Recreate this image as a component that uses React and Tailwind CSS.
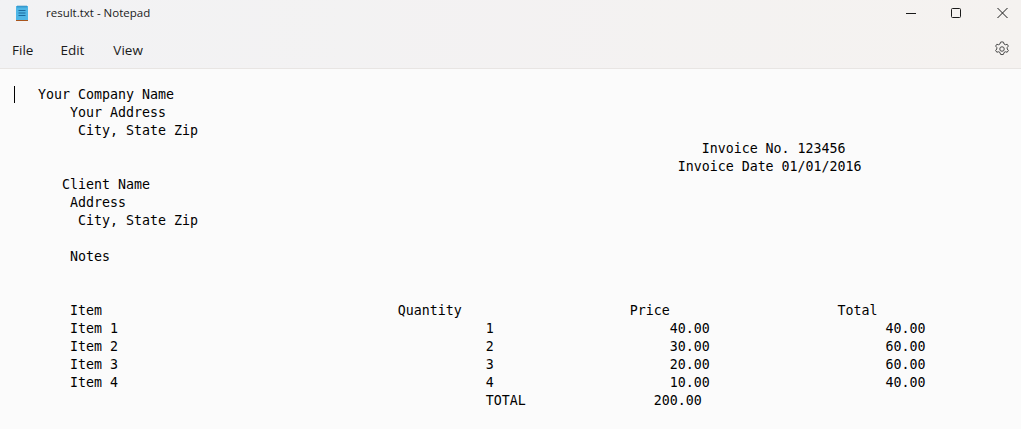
const lines = [
  "   Your Company Name",
  "       Your Address",
  "        City, State Zip",
  " ".repeat(86) + "Invoice No. 123456",
  " ".repeat(83) + "Invoice Date 01/01/2016",
  "      Client Name",
  "       Address",
  "        City, State Zip",
  "",
  "       Notes",
  "",
  "",
  "       Item" + " ".repeat(37) + "Quantity" + " ".repeat(21) + "Price" + " ".repeat(21) + "Total",
  "       Item 1" + " ".repeat(46) + "1" + " ".repeat(22) + "40.00" + " ".repeat(22) + "40.00",
  "       Item 2" + " ".repeat(46) + "2" + " ".repeat(22) + "30.00" + " ".repeat(22) + "60.00",
  "       Item 3" + " ".repeat(46) + "3" + " ".repeat(22) + "20.00" + " ".repeat(22) + "60.00",
  "       Item 4" + " ".repeat(46) + "4" + " ".repeat(22) + "10.00" + " ".repeat(22) + "40.00",
  " ".repeat(59) + "TOTAL" + " ".repeat(16) + "200.00",
];

function NotepadIcon() {
  return (
    <svg width="14" height="18" viewBox="0 0 14 18" className="ml-[15px]">
      <rect x="1" y="2" width="12" height="14" fill="#4fb6e6" />
      <rect x="1" y="16" width="12" height="1" fill="#a8551d" />
      <path d="M3 1.5v2M5 1.5v2M7 1.5v2M9 1.5v2M11 1.5v2" stroke="#1f7fb8" strokeWidth="1" />
      <path d="M3.5 6.5h7M3.5 9h7M3.5 11.5h7" stroke="#1a6a9e" strokeWidth="1" />
    </svg>
  );
}

export default function App() {
  return (
    <div className="w-[1021px] h-[429px] overflow-hidden flex flex-col bg-[#fbfbfb]">
      <div className="h-[69px] shrink-0 flex flex-col border-b border-[#e8e5e3] bg-gradient-to-r from-[#f2f2f4] to-[#f5f2f0] text-[#1b1b1b] font-['Open_Sans',sans-serif]">
        <div className="h-[26px] flex items-center">
          <NotepadIcon />
          <span className="ml-[17px] text-[11.5px] leading-none">result.txt - Notepad</span>
          <div className="ml-auto flex items-center">
            <svg width="10" height="12" viewBox="0 0 10 12" className="mr-[35px]">
              <path d="M0 6.5h10" stroke="#1a1a1a" strokeWidth="1" />
            </svg>
            <svg width="10" height="12" viewBox="0 0 10 12" className="mr-[36px]">
              <rect x="0.5" y="1.5" width="9" height="9" rx="1" fill="none" stroke="#1a1a1a" strokeWidth="1" />
            </svg>
            <svg width="11" height="12" viewBox="0 0 11 12" className="mr-[13px]">
              <path d="M0.5 1l10 10M10.5 1L0.5 11" stroke="#1a1a1a" strokeWidth="1" />
            </svg>
          </div>
        </div>
        <div className="h-[42px] pt-[7px] flex items-center text-[13.5px]">
          <span className="ml-[12px]">File</span>
          <span className="ml-[27px]">Edit</span>
          <span className="ml-[29px]">View</span>
          <svg width="18" height="18" viewBox="0 0 24 24" className="ml-auto mr-[10px] mb-[3px]" fill="none" stroke="#444" strokeWidth="1.3" strokeLinejoin="round">
            <path d="M12 2.5l2 .4.7 2.4 1.8 1 2.4-.6 1.6 2.4-1.6 1.9v2l1.6 1.9-1.6 2.4-2.4-.6-1.8 1-.7 2.4-2 .4-2-.4-.7-2.4-1.8-1-2.4.6-1.6-2.4 1.6-1.9v-2L3.5 8.1l1.6-2.4 2.4.6 1.8-1 .7-2.4z" />
            <circle cx="12" cy="12" r="3" />
          </svg>
        </div>
      </div>
      <div className="relative flex-1 pt-[17px] pl-[14px] font-['DejaVu_Sans_Mono',monospace] text-[13.29px] leading-[18px] text-black">
        <div className="absolute left-[14px] top-[17px] w-px h-[17px] bg-black" />
        {lines.map((l, i) => (
          <div key={i} className="h-[18px] whitespace-pre">{l}</div>
        ))}
      </div>
    </div>
  );
}
